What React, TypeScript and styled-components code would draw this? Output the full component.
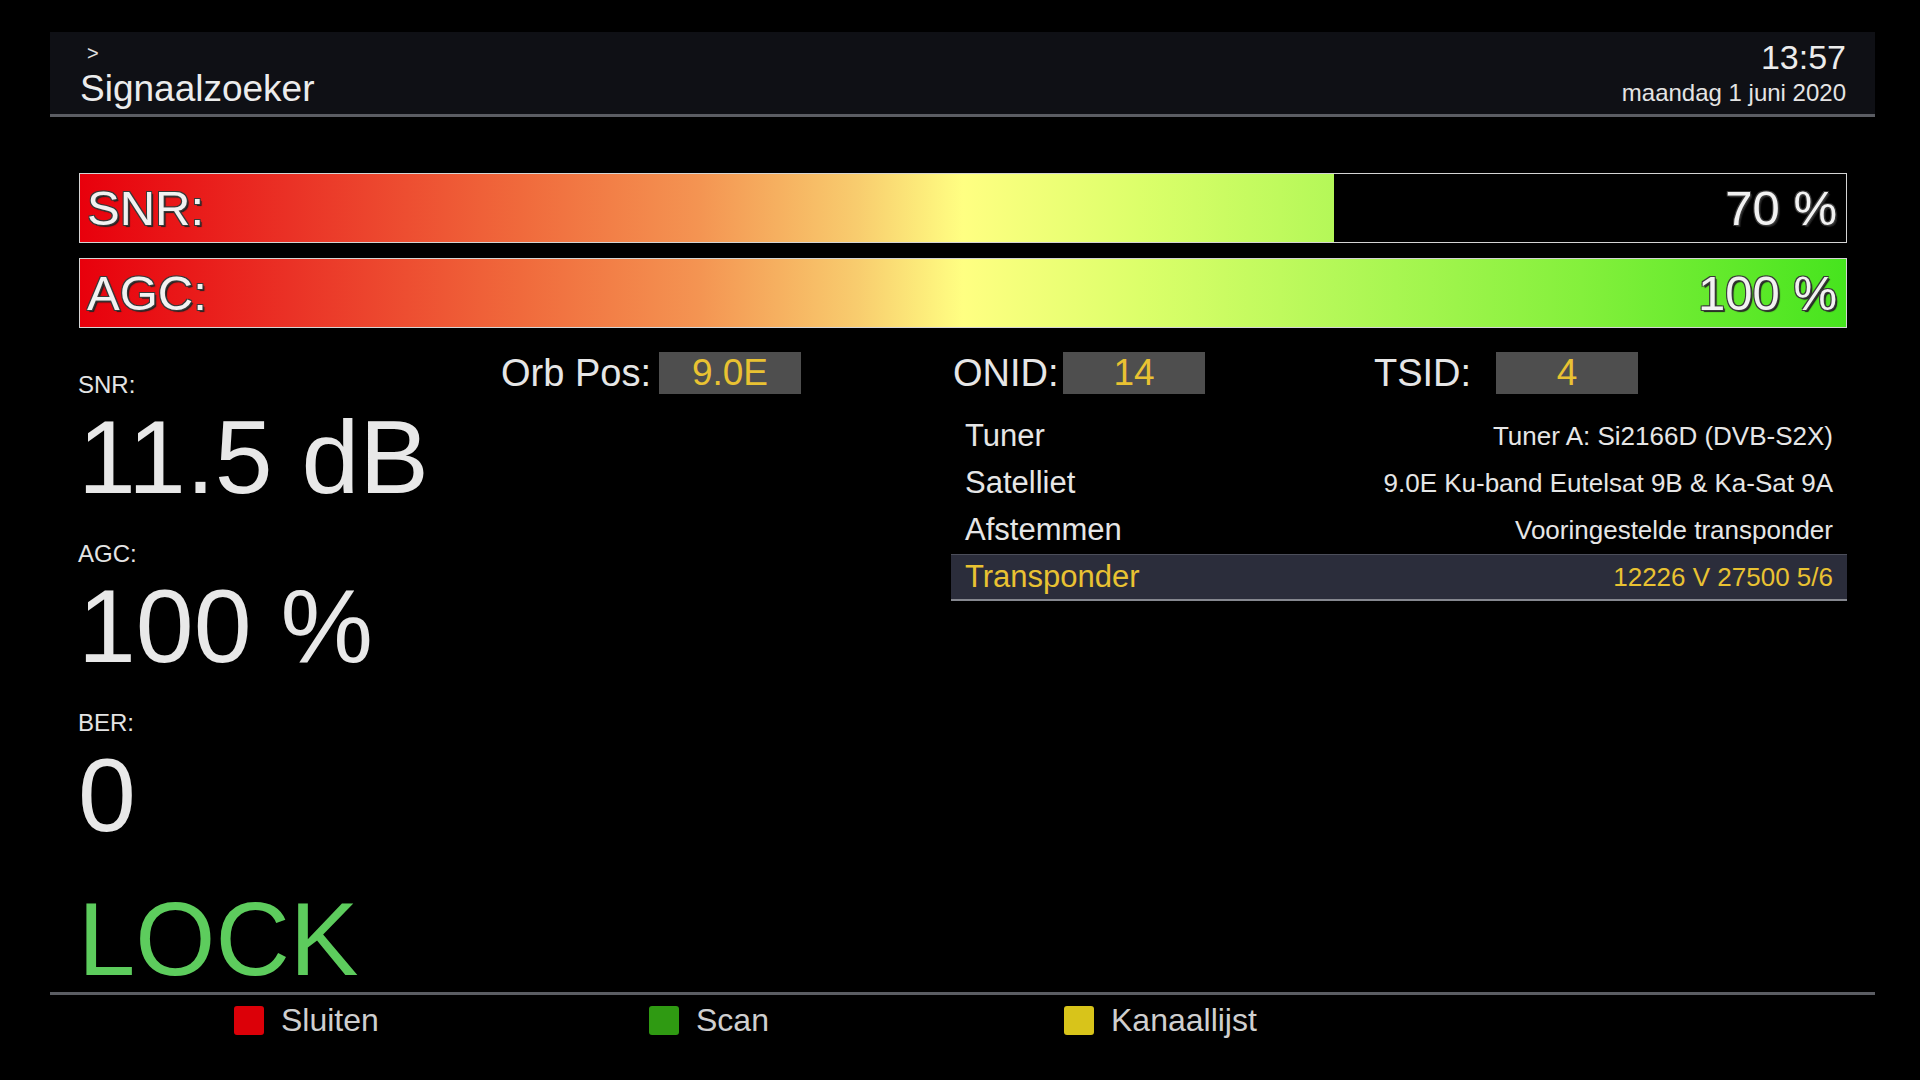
import styled, { createGlobalStyle } from 'styled-components'

const GlobalStyle = createGlobalStyle`
    html, body {
        margin: 0;
        padding: 0;
        background: #000;
    }
    body {
        width: 1920px;
        height: 1080px;
        overflow: hidden;
        font-family: "Liberation Sans", Arial, sans-serif;
        color: #e6e6e6;
    }
`

const GRADIENT = `linear-gradient(to right,
    #e8000c 0%, #ea3226 12%, #f06a3c 25%, #f49452 35%, #f8cc6e 44%,
    #ffff82 50%, #dcff6a 60%, #b4f858 71%, #84f03c 85%, #46e41e 100%)`

interface Stat {
    label: string
    value: string
}

const stats: Stat[] = [
    { label: 'SNR:', value: '11.5 dB' },
    { label: 'AGC:', value: '100 %' },
    { label: 'BER:', value: '0' },
]

const ids = [
    { label: 'Orb Pos:', value: '9.0E', width: 452, labelWidth: 158 },
    { label: 'ONID:', value: '14', width: 421, labelWidth: 110 },
    { label: 'TSID:', value: '4', width: 0, labelWidth: 122 },
]

const info = [
    { label: 'Tuner', value: 'Tuner A: Si2166D (DVB-S2X)' },
    { label: 'Satelliet', value: '9.0E Ku-band Eutelsat 9B & Ka-Sat 9A' },
    { label: 'Afstemmen', value: 'Vooringestelde transponder' },
    { label: 'Transponder', value: '12226 V 27500 5/6', active: true },
]

const buttons = [
    { color: '#dc0008', text: 'Sluiten' },
    { color: '#2f9a12', text: 'Scan' },
    { color: '#d8c41a', text: 'Kanaallijst' },
]

export default function App() {
    return (
        <>
            <GlobalStyle />
            <Screen>
                <Header>
                    <TitleBlock>
                        <Crumb>&gt;</Crumb>
                        <Title>Signaalzoeker</Title>
                    </TitleBlock>
                    <ClockBlock>
                        <Clock>13:57</Clock>
                        <DateText>maandag 1 juni 2020</DateText>
                    </ClockBlock>
                </Header>

                <Bars>
                    <Bar level={ 71 }>
                        <BarText>SNR:</BarText>
                        <BarText>70 %</BarText>
                    </Bar>
                    <Bar level={ 100 }>
                        <BarText>AGC:</BarText>
                        <BarText>100 %</BarText>
                    </Bar>
                </Bars>

                <Main>
                    <StatsColumn>
                        { stats.map( s => (
                            <StatBlock key={ s.label }>
                                <StatLabel>{ s.label }</StatLabel>
                                <StatValue>{ s.value }</StatValue>
                            </StatBlock>
                        ) ) }
                        <LockText>LOCK</LockText>
                    </StatsColumn>

                    <DetailColumn>
                        <IdRow>
                            { ids.map( id => (
                                <IdGroup key={ id.label } width={ id.width }>
                                    <IdLabel width={ id.labelWidth }>{ id.label }</IdLabel>
                                    <IdBox>{ id.value }</IdBox>
                                </IdGroup>
                            ) ) }
                        </IdRow>
                        <InfoList>
                            { info.map( row => (
                                <InfoRow key={ row.label } active={ !!row.active }>
                                    <InfoLabel>{ row.label }</InfoLabel>
                                    <InfoValue>{ row.value }</InfoValue>
                                </InfoRow>
                            ) ) }
                        </InfoList>
                    </DetailColumn>
                </Main>

                <Footer>
                    { buttons.map( b => (
                        <KeyHint key={ b.text }>
                            <KeySquare color={ b.color } />
                            <KeyText>{ b.text }</KeyText>
                        </KeyHint>
                    ) ) }
                </Footer>
            </Screen>
        </>
    )
}

const Screen = styled.div`
    width: 1920px;
    height: 1080px;
    box-sizing: border-box;
    padding: 32px 45px 0 50px;
    display: flex;
    flex-direction: column;
`

const Header = styled.header`
    height: 82px;
    background: #0f1015;
    border-bottom: 3px solid #5b5d63;
    display: flex;
    justify-content: space-between;
    padding: 0 29px 0 30px;
`

const TitleBlock = styled.div`
    display: flex;
    flex-direction: column;
    padding-top: 11px;
`

const Crumb = styled.div`
    font-size: 20px;
    line-height: 20px;
    color: #e0e0e0;
    padding-left: 7px;
`

const Title = styled.div`
    margin-top: 6px;
    font-size: 37px;
    line-height: 40px;
    color: #ececec;
`

const ClockBlock = styled.div`
    display: flex;
    flex-direction: column;
    align-items: flex-end;
    padding-top: 6px;
`

const Clock = styled.div`
    font-size: 34px;
    line-height: 38px;
    color: #ececec;
`

const DateText = styled.div`
    margin-top: 3px;
    font-size: 24px;
    line-height: 28px;
    color: #e4e4e4;
`

const Bars = styled.div`
    margin: 56px 0 0 29px;
    width: 1768px;
    display: flex;
    flex-direction: column;
    gap: 15px;
`

const Bar = styled.div<{ level: number }>`
    height: 70px;
    box-sizing: border-box;
    border: 1px solid #d4d4d4;
    background: linear-gradient(to right, transparent ${ p => p.level }%, #000 ${ p => p.level }%), ${ GRADIENT };
    display: flex;
    align-items: center;
    justify-content: space-between;
    padding: 0 9px 0 7px;
`

const BarText = styled.span`
    font-size: 49px;
    line-height: 50px;
    color: #f2f2f2;
    text-shadow: -1px -1px 0 #3a3a3a, 1px -1px 0 #3a3a3a, -1px 1px 0 #3a3a3a, 1px 1px 0 #3a3a3a, 2px 2px 1px #222;
`

const Main = styled.div`
    margin-top: 24px;
    height: 640px;
    display: flex;
`

const StatsColumn = styled.div`
    width: 423px;
    padding: 20px 0 0 28px;
    display: flex;
    flex-direction: column;
`

const StatBlock = styled.div`
    display: flex;
    flex-direction: column;
    margin-bottom: 27px;
`

const StatLabel = styled.div`
    font-size: 24px;
    line-height: 26px;
    color: #e4e4e4;
`

const StatValue = styled.div`
    margin-top: 3px;
    font-size: 104px;
    line-height: 113px;
    color: #e8e8e8;
`

const LockText = styled.div`
    margin-top: 11px;
    font-size: 103px;
    line-height: 100px;
    color: #5dcc5d;
`

const DetailColumn = styled.div`
    flex: 1;
    padding-right: 28px;
    display: flex;
    flex-direction: column;
`

const IdRow = styled.div`
    display: flex;
    height: 42px;
`

const IdGroup = styled.div<{ width: number }>`
    display: flex;
    align-items: center;
    ${ p => p.width ? `width: ${ p.width }px;` : 'flex: 1;' }
`

const IdLabel = styled.span<{ width: number }>`
    width: ${ p => p.width }px;
    font-size: 38px;
    line-height: 42px;
    color: #e6e6e6;
`

const IdBox = styled.span`
    width: 142px;
    height: 42px;
    background: #4e4e4e;
    color: #e9c232;
    font-size: 37px;
    line-height: 42px;
    text-align: center;
`

const InfoList = styled.div`
    margin: 19px 0 0 450px;
    display: flex;
    flex-direction: column;
`

const InfoRow = styled.div<{ active: boolean }>`
    height: 47px;
    box-sizing: border-box;
    display: flex;
    align-items: center;
    justify-content: space-between;
    padding: 0 14px 0 14px;
    color: ${ p => p.active ? '#e9c232' : '#e6e6e6' };
    background: ${ p => p.active ? '#2b2d3b' : 'transparent' };
    border-top: 1px solid ${ p => p.active ? '#4c4e5a' : 'transparent' };
    border-bottom: 2px solid ${ p => p.active ? '#85878f' : 'transparent' };
`

const InfoLabel = styled.span`
    font-size: 31px;
`

const InfoValue = styled.span`
    font-size: 26px;
`

const Footer = styled.footer`
    border-top: 3px solid #5b5d63;
    display: flex;
    padding: 9px 0 0 184px;
`

const KeyHint = styled.div`
    width: 415px;
    display: flex;
    align-items: center;
    gap: 17px;
`

const KeySquare = styled.span<{ color: string }>`
    width: 30px;
    height: 29px;
    border-radius: 3px;
    background: ${ p => p.color };
    box-shadow: 0 1px 2px rgba(0, 0, 0, 0.6);
`

const KeyText = styled.span`
    font-size: 32px;
    line-height: 32px;
    color: #cfcfcf;
`
